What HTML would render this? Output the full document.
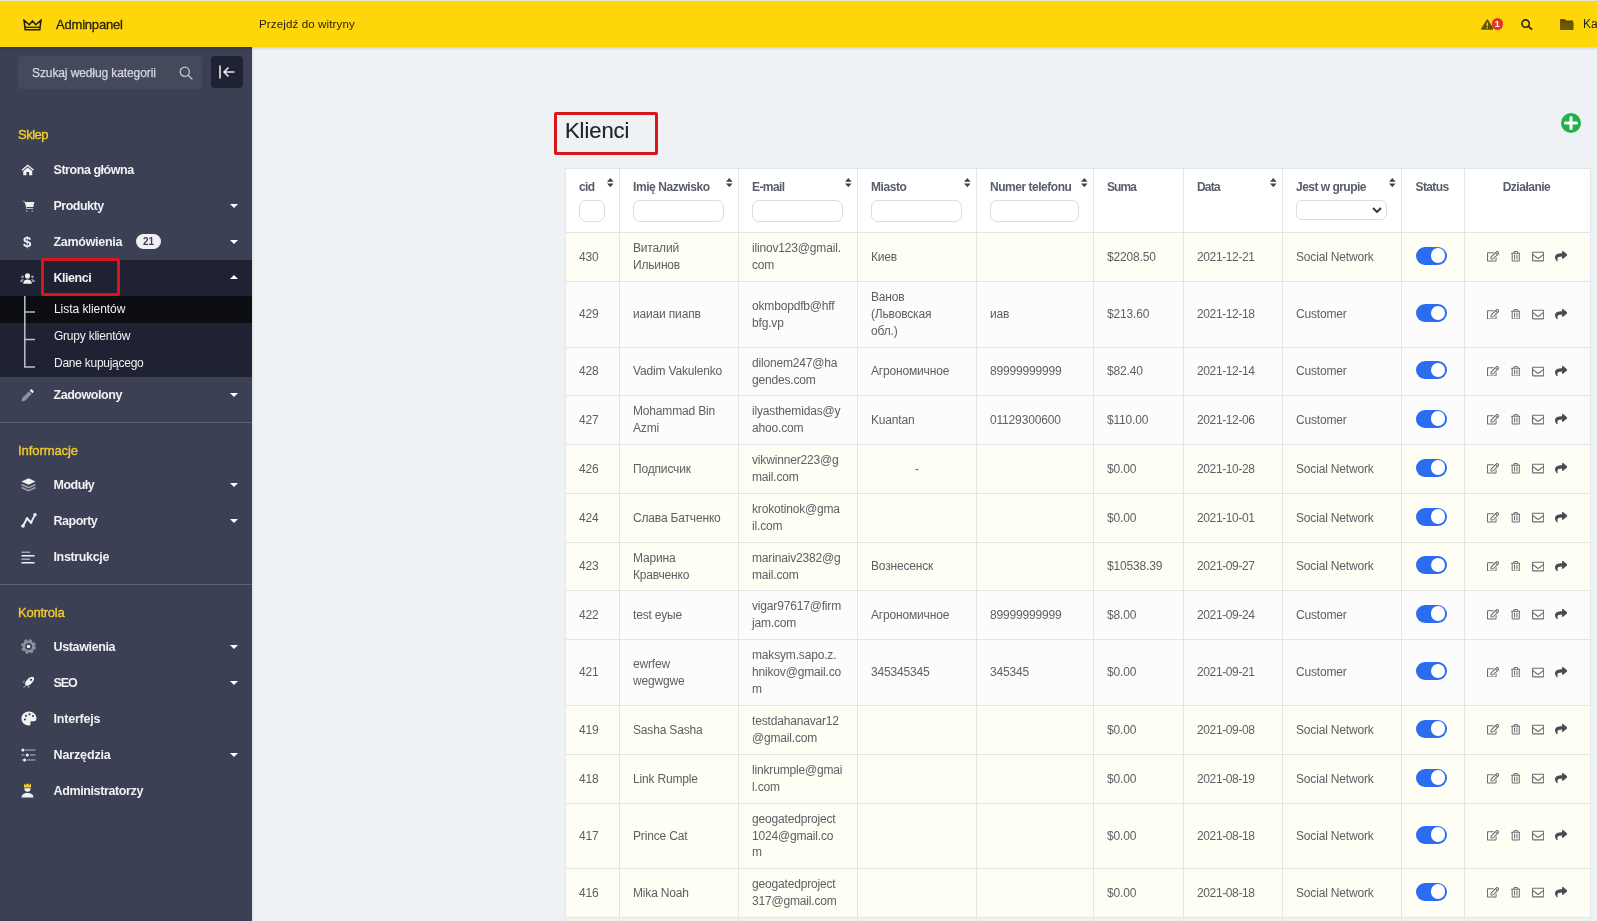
<!DOCTYPE html>
<html lang="pl"><head><meta charset="utf-8"><title>Klienci - Adminpanel</title>
<style>
*{box-sizing:border-box;margin:0;padding:0}
html,body{width:1597px;height:921px;overflow:hidden}
body{-webkit-font-smoothing:antialiased;font-family:"Liberation Sans",sans-serif;background:#eef2f4;color:#4b4f56;position:relative;font-size:12px}
#top{position:absolute;left:0;top:0;width:1597px;height:47px;background:#ffd60a;border-top:1px solid #e9e6da;z-index:5;box-shadow:0 1px 3px rgba(0,0,0,.18)}
#top .t{position:absolute;top:0;height:46px;line-height:46px;color:#2a2410;font-size:12.500px;white-space:nowrap}
#side{position:absolute;left:0;top:47px;width:252px;height:874px;background:#3c4054;z-index:3;box-shadow:1px 0 2px rgba(0,0,0,.08)}
#side .search{position:absolute;left:18px;top:9px;width:184px;height:33px;background:#444a5c;border-radius:4px;color:#d5d7de;font-size:12px;line-height:35px;padding-left:14px;white-space:nowrap;letter-spacing:-0.100px;-webkit-text-stroke:0.250px #d5d7de}
#side .collapse{position:absolute;left:211px;top:9px;width:32px;height:32px;background:#1f2233;border-radius:4px}
#side .lbl{position:absolute;left:18px;color:#f3cd2e;font-size:13px;letter-spacing:-0.350px;-webkit-text-stroke:0.350px #f3cd2e;white-space:nowrap;height:16px;line-height:16px}
#side .it{position:absolute;left:0;width:252px;height:36px;line-height:36px;color:#f1f1f3;font-weight:bold;font-size:12.500px;padding-left:53.500px;letter-spacing:-0.400px;white-space:nowrap}
#side .it.act{background:#1f2233}
#side .it svg.ic{position:absolute;left:20.500px;top:11px}
#side .it .car{position:absolute;left:230px;top:16px;width:0;height:0;border-left:4px solid transparent;border-right:4px solid transparent;border-top:4.500px solid #fff}
#side .it .car.up{border-top:none;border-bottom:4.500px solid #fff;top:15px}
#side .sub{position:absolute;left:0;width:252px;height:27px;line-height:27px;color:#f1f1f3;font-size:12px;padding-left:54px;background:#1f2233;letter-spacing:-0.120px;white-space:nowrap}
#side .sub.on{background:#0d0e13}
#side .hr{position:absolute;left:0;width:252px;height:1px;background:#5d6175}
#side .badge{display:inline-block;vertical-align:middle;margin-left:14px;margin-top:-2px;width:25px;height:15px;line-height:15px;border-radius:8px;background:#f1f1f3;color:#3c4054;font-size:10px;text-align:center;letter-spacing:0}
.redbox{position:absolute;border:3px solid #d9171b;border-radius:2px;z-index:9}
#main h1{position:absolute;left:565px;top:117px;font-size:22px;font-weight:normal;color:#20242c;line-height:28px;letter-spacing:-0.070px;-webkit-text-stroke:0.200px #20242c;white-space:nowrap}
.plus{position:absolute;left:1561px;top:113px;width:20px;height:20px}
#tb{position:absolute;left:565px;top:168px;width:1026px;border-collapse:collapse;table-layout:fixed;background:#fff}
#tb td,#tb th{border:1px solid #e4e5e7;padding:0 4px 0 13px;vertical-align:middle;text-align:left;font-size:12px;line-height:16.800px;color:#5e6065;white-space:nowrap;font-weight:normal;letter-spacing:-0.170px;overflow:hidden}
#tb td.dt{letter-spacing:-0.380px}
#tb tr.hd{height:64px}
#tb th{vertical-align:top;position:relative;background:#fff}
#tb th .hl{position:absolute;left:13px;top:10px;font-weight:bold;color:#585e69;font-size:12px;letter-spacing:-0.420px;white-space:nowrap;line-height:16px}
#tb th.c .hl{left:-2px;right:0;text-align:center}
#tb th .srt{position:absolute;right:5px;top:9px}
#tb th .inp{position:absolute;left:13px;top:31px;height:22px;border:1px solid #dadcdf;border-radius:7px;background:#fff}
#tb th .inp.sel{height:20px;border-radius:6px}
#tb th .inp.sel svg{position:absolute;right:4px;top:6px}
#tb tr.sn td{background:#fefef4}
#tb tr.cu td{background:#fcfcfc}
#tb tr.gr td{background:#e9f8ee}
#tb td.st{padding:0;text-align:center}
.tg{display:inline-block;width:31px;height:18px;border-radius:9px;background:#2b6cf0;position:relative;vertical-align:middle;margin-top:-1px;top:-1.100px;left:-1.500px}
.tg i{position:absolute;right:1.700px;top:1.750px;width:14.500px;height:14.500px;border-radius:50%;background:#fff}
#tb td.ac{padding:0}
.acw{position:relative;height:11px;width:124px;top:-0.500px}
.ai{position:absolute;top:0}
.ctr{text-align:center;padding-right:9px}

#tb,#side,#top,#main h1{will-change:transform}

</style></head><body>
<div id="top">
<svg style="position:absolute;left:23px;top:17.800px" width="19" height="12" viewBox="0 0 19 12"><path d="M1 1.200L2.200 10.700H16.800L18 1.200L12.700 5.800L9.500 2L6.300 5.800Z" fill="none" stroke="#221e10" stroke-width="1.500" stroke-linejoin="miter"/><path d="M2 8.300H17" stroke="#221e10" stroke-width="1.300"/></svg>
<span class="t" style="left:56px;font-size:13px;letter-spacing:-0.200px;top:1px;-webkit-text-stroke:0.300px #2a2410">Adminpanel</span>
<span class="t" style="left:259px;font-size:11.600px;letter-spacing:0.100px;top:0px">Przejdź do witryny</span>
<svg style="position:absolute;left:1480.700px;top:18px" width="12.600" height="10.800" viewBox="0 0 14 12"><path d="M7 1.200L13 11H1z" fill="#675600" stroke="#675600" stroke-width="1.800" stroke-linejoin="round"/><path d="M7 4.200v3.600" stroke="#ffd60a" stroke-width="1.500"/><circle cx="7" cy="9.600" r="0.850" fill="#ffd60a"/></svg>
<span style="position:absolute;left:1491.500px;top:17px;width:11.600px;height:11.600px;border-radius:50%;background:#e5342c;color:#fff;font-size:9px;font-weight:bold;line-height:12.600px;text-align:center">1</span>
<svg style="position:absolute;left:1521px;top:17.800px" width="11.500" height="11" viewBox="0 0 11.500 11"><circle cx="4.600" cy="4.600" r="3.700" fill="none" stroke="#2a2410" stroke-width="1.600"/><path d="M7.300 7.300L10.600 10.200" stroke="#2a2410" stroke-width="1.700" stroke-linecap="round"/></svg>
<svg style="position:absolute;left:1560px;top:18px" width="13.600" height="11" viewBox="0 0 13.600 11"><path d="M0 1Q0 0 1 0H4.600L6.200 1.600H12.200Q13.200 1.600 13.200 2.600V4.500H0z" fill="#5c4c00"/><path d="M0 3.900H13.600V10Q13.600 11 12.600 11H1Q0 11 0 10z" fill="#6b5a00"/></svg>
<span class="t" style="left:1583px;font-size:12px;top:-0.500px">Ka</span>
</div>

<div id="side">
<div class="search">Szukaj według kategorii<svg style="position:absolute;left:161px;top:10px" width="14" height="14" viewBox="0 0 14 14"><circle cx="5.800" cy="5.800" r="4.600" fill="none" stroke="#c3c6d0" stroke-width="1.300"/><path d="M9.200 9.200L13 13" stroke="#c3c6d0" stroke-width="1.300" stroke-linecap="round"/></svg></div>
<div class="collapse"><svg style="position:absolute;left:8px;top:9px" width="16" height="14" viewBox="0 0 16 14"><path d="M1 0.500v13M15.500 7H5M9.500 2.500L5 7l4.500 4.500" fill="none" stroke="#e8e9ee" stroke-width="1.600"/></svg></div>

<div class="lbl" style="top:80px;letter-spacing:-0.500px">Sklep</div>
<div class="it" style="top:105px;letter-spacing:-0.45px"><svg class="ic" width="13.500" height="11.700" viewBox="0 0 15 13" style="left:21px;top:12px"><path d="M7.500 0.500L0.500 6.300l1 1.100L7.500 2.500l6 4.900 1-1.100z" fill="#f1f1f3"/><path d="M7.500 3.800L2.500 7.900V12.500H6V9H9v3.500h3.500V7.900z" fill="#f1f1f3"/></svg>Strona główna</div>
<div class="it" style="top:141px;letter-spacing:-0.51px"><svg class="ic" width="14" height="13" viewBox="0 0 15 14" style="left:21.500px;top:12px"><path d="M0.500 1.400h2l0.500 1.200" fill="none" stroke="#8d91a1" stroke-width="1.200"/><path d="M2.800 2.200H13.300l-1.300 5.300H4.400z" fill="#f1f1f3"/><path d="M4.400 7.500l0.400 1.700H12" fill="none" stroke="#b9bcc8" stroke-width="1.100"/><circle cx="5.200" cy="12" r="1" fill="#8d91a1"/><circle cx="11" cy="12" r="1" fill="#8d91a1"/></svg>Produkty<span class="car"></span></div>
<div class="it" style="top:177px;letter-spacing:-0.3px"><span style="position:absolute;left:23px;top:0;font-size:15px;font-weight:bold;letter-spacing:0">$</span>Zamówienia<span class="badge">21</span><span class="car"></span></div>
<div class="it act" style="top:213px;letter-spacing:-0.45px"><svg class="ic" width="15" height="11" viewBox="0 0 16 12" style="left:19.700px;top:12.500px"><circle cx="8" cy="3.200" r="2.800" fill="#f1f1f3"/><path d="M3.300 11.800c0-3.200 2-4.700 4.700-4.700s4.700 1.500 4.700 4.700z" fill="#f1f1f3"/><circle cx="2.600" cy="4.200" r="1.500" fill="#9a9eae"/><circle cx="13.400" cy="4.200" r="1.500" fill="#9a9eae"/><path d="M0 9.800c0-2 1-3 2.600-3 .6 0 1.100.1 1.500.4-1 .8-1.500 1.700-1.600 2.600z" fill="#9a9eae"/><path d="M16 9.800c0-2-1-3-2.600-3-.6 0-1.100.1-1.500.4 1 .8 1.500 1.700 1.600 2.600z" fill="#9a9eae"/></svg>Klienci<span class="car up"></span></div>
<div class="sub on" style="top:249px;letter-spacing:-0.050px">Lista klientów</div>
<div class="sub" style="top:276px;letter-spacing:-0.230px">Grupy klientów</div>
<div class="sub" style="top:303px;letter-spacing:-0.260px">Dane kupującego</div>
<svg style="position:absolute;left:24px;top:249px" width="12" height="81" viewBox="0 0 12 81"><path d="M0.800 0V71H11M0.800 16H11M0.800 43.500H11" fill="none" stroke="#bfc1ca" stroke-width="1.500"/></svg>
<div class="redbox" style="left:41px;top:211px;width:79px;height:38px"></div>
<div class="it" style="top:330px;letter-spacing:-0.45px"><svg class="ic" width="13" height="13" viewBox="0 0 14 14" style="top:12px"><path d="M0.500 13.500l0.800-3.800L8.500 2.500l3 3L4.300 12.700z" fill="#8d91a1"/><path d="M9.300 1.700l1-1c.5-.5 1.200-.5 1.700 0l1.300 1.300c.5.500.5 1.200 0 1.700l-1 1z" fill="#f1f1f3"/></svg>Zadowolony<span class="car"></span></div>
<div class="hr" style="top:375px"></div>

<div class="lbl" style="top:396px;letter-spacing:-0.070px">Informacje</div>
<div class="it" style="top:420px;letter-spacing:-0.49px"><svg class="ic" width="15" height="14" viewBox="0 0 15 14"><path d="M7.500 0.300L14.500 3.500 7.500 6.700 0.500 3.500z" fill="#f1f1f3"/><path d="M0.500 6.500l7 3.200 7-3.200M0.500 9.500l7 3.200 7-3.200" fill="none" stroke="#9da1b0" stroke-width="1.500"/></svg>Moduły<span class="car"></span></div>
<div class="it" style="top:456px;letter-spacing:-0.49px"><svg class="ic" width="16" height="15" viewBox="0 0 16 15" style="top:10px"><path d="M2 13L6 5.500 10 9.500 14 1.800" fill="none" stroke="#f1f1f3" stroke-width="1.800" stroke-linejoin="round"/><circle cx="2" cy="13" r="1.800" fill="#f1f1f3"/><circle cx="6" cy="5.500" r="1.300" fill="#f1f1f3"/><circle cx="10" cy="9.500" r="1.300" fill="#f1f1f3"/><circle cx="14" cy="1.800" r="1.700" fill="#f1f1f3"/></svg>Raporty<span class="car"></span></div>
<div class="it" style="top:492px;letter-spacing:-0.35px"><svg class="ic" width="14" height="13" viewBox="0 0 14 13" style="top:12px"><path d="M0.500 1.200h8.500M0.500 8.200h8.500" stroke="#9da1b0" stroke-width="1.400"/><path d="M0.500 4.700h13M0.500 11.700h13" stroke="#f1f1f3" stroke-width="1.500"/></svg>Instrukcje</div>
<div class="hr" style="top:537px"></div>

<div class="lbl" style="top:558px;letter-spacing:-0.240px">Kontrola</div>
<div class="it" style="top:582px;letter-spacing:-0.36px"><svg class="ic" width="15" height="15" viewBox="0 0 15 15" style="top:10px"><circle cx="7.500" cy="7.500" r="4.800" fill="none" stroke="#8d91a1" stroke-width="2.600"/><circle cx="7.500" cy="7.500" r="6.500" fill="none" stroke="#8d91a1" stroke-width="1.800" stroke-dasharray="2.900 2.200"/><circle cx="7.500" cy="7.500" r="1.800" fill="#f1f1f3"/></svg>Ustawienia<span class="car"></span></div>
<div class="it" style="top:618px;letter-spacing:-1.1px"><svg class="ic" width="15" height="15" viewBox="0 0 15 15" style="top:10px"><path d="M3.200 5.200L1.200 7.800l2.600-.4zM9.300 11.400l-2.500 2 .3-2.700zM3.800 10.200L1.600 13.600l3.500-2.100z" fill="#8d91a1"/><ellipse cx="8.600" cy="6.200" rx="5.700" ry="2.900" transform="rotate(-45 8.600 6.200)" fill="#f1f1f3"/><circle cx="10" cy="4.800" r="1.100" fill="#3c4054"/></svg>SEO<span class="car"></span></div>
<div class="it" style="top:654px;letter-spacing:-0.2px"><svg class="ic" width="16" height="15" viewBox="0 0 16 15" style="top:10px"><path d="M8 0.500C3.800 0.500 0.500 3.600 0.500 7.500s3.300 7 7.500 7c1.200 0 1.800-.9 1.500-1.900-.3-1.100-.5-2.100 1.200-2.300l2.300-.1c1.500-.1 2.500-1.100 2.500-2.700C15.500 3.600 12.200 0.500 8 0.500z" fill="#f1f1f3"/><circle cx="4" cy="8.500" r="1.100" fill="#3c4054"/><circle cx="5" cy="4.800" r="1.100" fill="#3c4054"/><circle cx="8.500" cy="3.300" r="1.100" fill="#3c4054"/><circle cx="12" cy="5" r="1.100" fill="#3c4054"/></svg>Interfejs</div>
<div class="it" style="top:690px;letter-spacing:-0.13px"><svg class="ic" width="15" height="14" viewBox="0 0 15 14" style="top:11px"><path d="M4.500 2h10M0.500 7h3M9 7h5.500M6 12h8.500M0.500 12h1" stroke="#8d91a1" stroke-width="1.400"/><circle cx="2" cy="2" r="1.600" fill="#f1f1f3"/><circle cx="6.300" cy="7" r="1.600" fill="#f1f1f3"/><circle cx="3.600" cy="12" r="1.600" fill="#f1f1f3"/></svg>Narzędzia<span class="car"></span></div>
<div class="it" style="top:726px;letter-spacing:-0.38px"><svg class="ic" width="13" height="15" viewBox="0 0 13 15" style="left:21px;top:10px"><path d="M3 0.500l1.700 1.600L6.500 0.300l1.800 1.800L10 0.500V4.500H3z" fill="#f3cd2e"/><path d="M3.300 5.200h6.400c0 2.300-1.300 3.600-3.200 3.600S3.300 7.500 3.300 5.200z" fill="#f1f1f3"/><path d="M0.500 14.500c.3-3 2-4.500 6-4.500s5.700 1.500 6 4.500z" fill="#f1f1f3"/></svg>Administratorzy</div>
</div>

<div id="main">
<div class="redbox" style="left:554px;top:112px;width:104px;height:43px"></div>
<h1>Klienci</h1>
<div class="plus"><svg width="20" height="20" viewBox="0 0 20 20"><circle cx="10" cy="10" r="10" fill="#22b14c"/><path d="M10 4.500v11M4.500 10h11" stroke="#fff" stroke-width="3" stroke-linecap="round"/></svg></div>
<table id="tb"><colgroup><col style="width:54px"><col style="width:119px"><col style="width:119px"><col style="width:119px"><col style="width:117px"><col style="width:90px"><col style="width:99px"><col style="width:119px"><col style="width:63px"><col style="width:126px"></colgroup>
<tr class="hd">
<th><span class="hl" style="letter-spacing:-0.6px">cid</span><svg class="srt" width="6.600" height="9.200" viewBox="0 0 7 10" preserveAspectRatio="none"><path fill="#3f434a" d="M3.500 0L7 4H0zM0 6h7L3.500 10z"/></svg><span class="inp" style="width:26px"></span></th>
<th><span class="hl" style="letter-spacing:-0.41px">Imię Nazwisko</span><svg class="srt" width="6.600" height="9.200" viewBox="0 0 7 10" preserveAspectRatio="none"><path fill="#3f434a" d="M3.500 0L7 4H0zM0 6h7L3.500 10z"/></svg><span class="inp" style="width:91px"></span></th>
<th><span class="hl" style="letter-spacing:-0.58px">E-mail</span><svg class="srt" width="6.600" height="9.200" viewBox="0 0 7 10" preserveAspectRatio="none"><path fill="#3f434a" d="M3.500 0L7 4H0zM0 6h7L3.500 10z"/></svg><span class="inp" style="width:91px"></span></th>
<th><span class="hl" style="letter-spacing:-0.44px">Miasto</span><svg class="srt" width="6.600" height="9.200" viewBox="0 0 7 10" preserveAspectRatio="none"><path fill="#3f434a" d="M3.500 0L7 4H0zM0 6h7L3.500 10z"/></svg><span class="inp" style="width:91px"></span></th>
<th><span class="hl" style="letter-spacing:-0.47px">Numer telefonu</span><svg class="srt" width="6.600" height="9.200" viewBox="0 0 7 10" preserveAspectRatio="none"><path fill="#3f434a" d="M3.500 0L7 4H0zM0 6h7L3.500 10z"/></svg><span class="inp" style="width:89px"></span></th>
<th><span class="hl" style="letter-spacing:-0.9px">Suma</span></th>
<th><span class="hl" style="letter-spacing:-0.8px">Data</span><svg class="srt" width="6.600" height="9.200" viewBox="0 0 7 10" preserveAspectRatio="none"><path fill="#3f434a" d="M3.500 0L7 4H0zM0 6h7L3.500 10z"/></svg></th>
<th><span class="hl" style="letter-spacing:-0.52px">Jest w grupie</span><svg class="srt" width="6.600" height="9.200" viewBox="0 0 7 10" preserveAspectRatio="none"><path fill="#3f434a" d="M3.500 0L7 4H0zM0 6h7L3.500 10z"/></svg><span class="inp sel" style="width:91px"><svg width="10" height="7" viewBox="0 0 10 7"><path d="M1 1l4 4 4-4" fill="none" stroke="#333" stroke-width="1.800"/></svg></span></th>
<th class="c"><span class="hl" style="letter-spacing:-0.62px">Status</span></th>
<th class="c"><span class="hl" style="letter-spacing:-0.49px">Działanie</span></th>
</tr>
<tr class="sn" style="height:49px"><td>430</td><td>Виталий<br>Ильинов</td><td>ilinov123@gmail.<br>com</td><td>Киев</td><td></td><td>$2208.50</td><td class="dt">2021-12-21</td><td>Social Network</td><td class="st"><span class="tg"><i></i></span></td><td class="ac"><div class="acw"><svg class="ai" style="left:22px;top:0" width="12.300" height="10.500" viewBox="0 0 576 512" preserveAspectRatio="none"><path fill="#696d73" d="M402.3 344.9l32-32c5-5 13.700-1.500 13.700 5.700V464c0 26.500-21.500 48-48 48H48c-26.500 0-48-21.500-48-48V112c0-26.500 21.500-48 48-48h273.500c7.100 0 10.700 8.600 5.700 13.700l-32 32c-1.500 1.500-3.500 2.300-5.700 2.300H48v352h352V350.500c0-2.100.8-4.100 2.300-5.600zm156.600-201.800L296.300 405.700l-90.400 10c-26.200 2.900-48.500-19.200-45.600-45.600l10-90.400L432.900 17.100c22.900-22.900 59.900-22.900 82.700 0l43.200 43.200c22.900 22.900 22.900 60 .1 82.800zM460.100 174L402 115.900 216.200 301.800l-7.300 65.300 65.300-7.300L460.100 174zm64.800-79.700l-43.200-43.200c-4.100-4.100-10.800-4.100-14.800 0L436 82l58.100 58.100 30.900-30.900c4-4.200 4-10.800-.1-14.900z"/></svg><svg class="ai" style="left:45.500px;top:0.300px" width="9.500" height="10.500" viewBox="0 0 448 512" preserveAspectRatio="none"><path fill="#696d73" d="M268 416h24a12 12 0 0 0 12-12V188a12 12 0 0 0-12-12h-24a12 12 0 0 0-12 12v216a12 12 0 0 0 12 12zM432 80h-82.410l-34-56.700A48 48 0 0 0 274.410 0H173.590a48 48 0 0 0-41.160 23.300L98.410 80H16A16 16 0 0 0 0 96v16a16 16 0 0 0 16 16h16v336a48 48 0 0 0 48 48h288a48 48 0 0 0 48-48V128h16a16 16 0 0 0 16-16V96a16 16 0 0 0-16-16zM171.840 50.910A6 6 0 0 1 177 48h94a6 6 0 0 1 5.150 2.910L293.610 80H154.390zM368 464H80V128h288zm-212-48h24a12 12 0 0 0 12-12V188a12 12 0 0 0-12-12h-24a12 12 0 0 0-12 12v216a12 12 0 0 0 12 12z"/></svg><svg class="ai" style="left:66.900px;top:-0.600px" width="12.300" height="13" viewBox="0 0 512 512" preserveAspectRatio="none"><path fill="#696d73" d="M464 64H48C21.490 64 0 85.490 0 112v288c0 26.510 21.490 48 48 48h416c26.510 0 48-21.490 48-48V112c0-26.510-21.490-48-48-48zm0 48v40.805c-22.422 18.259-58.168 46.651-134.587 106.490-16.841 13.247-50.201 45.072-73.413 44.701-23.208.375-56.579-31.459-73.413-44.701C106.180 199.465 70.425 171.067 48 152.805V112h416zM48 400V214.398c22.914 18.251 55.409 43.862 104.938 82.646 21.857 17.205 60.134 55.186 103.062 54.955 42.717.231 80.509-37.199 103.053-54.947 49.528-38.783 82.032-64.401 104.947-82.653V400H48z"/></svg><svg class="ai" style="left:89.900px;top:-0.700px" width="12.600" height="12" viewBox="0 0 512 512" preserveAspectRatio="none"><path fill="#474b52" d="M503.691 189.836L327.687 37.851C312.281 24.546 288 35.347 288 56.015v80.053C127.371 137.907 0 170.100 0 322.326c0 61.441 39.581 122.309 83.333 154.132 13.653 9.931 33.111-2.533 28.077-18.631C66.066 312.814 132.917 274.316 288 272.085V360c0 20.700 24.300 31.453 39.687 18.164l176.004-152c11.071-9.562 11.086-26.753 0-36.328z"/></svg></div></td></tr>
<tr class="cu" style="height:66px"><td>429</td><td>иаиаи пиапв</td><td>okmbopdfb@hff<br>bfg.vp</td><td>Ванов<br>(Львовская<br>обл.)</td><td>иав</td><td>$213.60</td><td class="dt">2021-12-18</td><td>Customer</td><td class="st"><span class="tg"><i></i></span></td><td class="ac"><div class="acw"><svg class="ai" style="left:22px;top:0" width="12.300" height="10.500" viewBox="0 0 576 512" preserveAspectRatio="none"><path fill="#696d73" d="M402.3 344.9l32-32c5-5 13.700-1.500 13.700 5.700V464c0 26.500-21.500 48-48 48H48c-26.500 0-48-21.500-48-48V112c0-26.500 21.500-48 48-48h273.500c7.100 0 10.700 8.600 5.700 13.700l-32 32c-1.500 1.500-3.500 2.300-5.700 2.300H48v352h352V350.500c0-2.100.8-4.100 2.300-5.600zm156.600-201.800L296.300 405.700l-90.400 10c-26.200 2.900-48.500-19.200-45.600-45.600l10-90.400L432.900 17.100c22.900-22.900 59.900-22.900 82.700 0l43.200 43.200c22.900 22.900 22.900 60 .1 82.800zM460.100 174L402 115.900 216.200 301.800l-7.300 65.300 65.300-7.300L460.100 174zm64.800-79.700l-43.200-43.200c-4.100-4.100-10.800-4.100-14.800 0L436 82l58.100 58.100 30.900-30.900c4-4.200 4-10.800-.1-14.900z"/></svg><svg class="ai" style="left:45.500px;top:0.300px" width="9.500" height="10.500" viewBox="0 0 448 512" preserveAspectRatio="none"><path fill="#696d73" d="M268 416h24a12 12 0 0 0 12-12V188a12 12 0 0 0-12-12h-24a12 12 0 0 0-12 12v216a12 12 0 0 0 12 12zM432 80h-82.410l-34-56.700A48 48 0 0 0 274.410 0H173.590a48 48 0 0 0-41.160 23.300L98.410 80H16A16 16 0 0 0 0 96v16a16 16 0 0 0 16 16h16v336a48 48 0 0 0 48 48h288a48 48 0 0 0 48-48V128h16a16 16 0 0 0 16-16V96a16 16 0 0 0-16-16zM171.840 50.910A6 6 0 0 1 177 48h94a6 6 0 0 1 5.150 2.910L293.610 80H154.390zM368 464H80V128h288zm-212-48h24a12 12 0 0 0 12-12V188a12 12 0 0 0-12-12h-24a12 12 0 0 0-12 12v216a12 12 0 0 0 12 12z"/></svg><svg class="ai" style="left:66.900px;top:-0.600px" width="12.300" height="13" viewBox="0 0 512 512" preserveAspectRatio="none"><path fill="#696d73" d="M464 64H48C21.490 64 0 85.490 0 112v288c0 26.510 21.490 48 48 48h416c26.510 0 48-21.490 48-48V112c0-26.510-21.490-48-48-48zm0 48v40.805c-22.422 18.259-58.168 46.651-134.587 106.490-16.841 13.247-50.201 45.072-73.413 44.701-23.208.375-56.579-31.459-73.413-44.701C106.180 199.465 70.425 171.067 48 152.805V112h416zM48 400V214.398c22.914 18.251 55.409 43.862 104.938 82.646 21.857 17.205 60.134 55.186 103.062 54.955 42.717.231 80.509-37.199 103.053-54.947 49.528-38.783 82.032-64.401 104.947-82.653V400H48z"/></svg><svg class="ai" style="left:89.900px;top:-0.700px" width="12.600" height="12" viewBox="0 0 512 512" preserveAspectRatio="none"><path fill="#474b52" d="M503.691 189.836L327.687 37.851C312.281 24.546 288 35.347 288 56.015v80.053C127.371 137.907 0 170.100 0 322.326c0 61.441 39.581 122.309 83.333 154.132 13.653 9.931 33.111-2.533 28.077-18.631C66.066 312.814 132.917 274.316 288 272.085V360c0 20.700 24.300 31.453 39.687 18.164l176.004-152c11.071-9.562 11.086-26.753 0-36.328z"/></svg></div></td></tr>
<tr class="cu" style="height:48px"><td>428</td><td>Vadim Vakulenko</td><td>dilonem247@ha<br>gendes.com</td><td>Агрономичное</td><td>89999999999</td><td>$82.40</td><td class="dt">2021-12-14</td><td>Customer</td><td class="st"><span class="tg"><i></i></span></td><td class="ac"><div class="acw"><svg class="ai" style="left:22px;top:0" width="12.300" height="10.500" viewBox="0 0 576 512" preserveAspectRatio="none"><path fill="#696d73" d="M402.3 344.9l32-32c5-5 13.700-1.500 13.700 5.700V464c0 26.500-21.500 48-48 48H48c-26.500 0-48-21.500-48-48V112c0-26.500 21.500-48 48-48h273.500c7.100 0 10.700 8.600 5.700 13.700l-32 32c-1.500 1.500-3.500 2.300-5.700 2.300H48v352h352V350.500c0-2.100.8-4.100 2.300-5.600zm156.600-201.800L296.300 405.700l-90.400 10c-26.200 2.900-48.500-19.200-45.600-45.600l10-90.400L432.900 17.100c22.900-22.900 59.900-22.900 82.700 0l43.200 43.200c22.900 22.900 22.900 60 .1 82.800zM460.100 174L402 115.900 216.200 301.800l-7.300 65.300 65.300-7.300L460.100 174zm64.800-79.700l-43.200-43.200c-4.100-4.100-10.800-4.100-14.800 0L436 82l58.100 58.100 30.900-30.900c4-4.200 4-10.800-.1-14.900z"/></svg><svg class="ai" style="left:45.500px;top:0.300px" width="9.500" height="10.500" viewBox="0 0 448 512" preserveAspectRatio="none"><path fill="#696d73" d="M268 416h24a12 12 0 0 0 12-12V188a12 12 0 0 0-12-12h-24a12 12 0 0 0-12 12v216a12 12 0 0 0 12 12zM432 80h-82.410l-34-56.700A48 48 0 0 0 274.410 0H173.590a48 48 0 0 0-41.160 23.300L98.410 80H16A16 16 0 0 0 0 96v16a16 16 0 0 0 16 16h16v336a48 48 0 0 0 48 48h288a48 48 0 0 0 48-48V128h16a16 16 0 0 0 16-16V96a16 16 0 0 0-16-16zM171.840 50.910A6 6 0 0 1 177 48h94a6 6 0 0 1 5.150 2.910L293.610 80H154.390zM368 464H80V128h288zm-212-48h24a12 12 0 0 0 12-12V188a12 12 0 0 0-12-12h-24a12 12 0 0 0-12 12v216a12 12 0 0 0 12 12z"/></svg><svg class="ai" style="left:66.900px;top:-0.600px" width="12.300" height="13" viewBox="0 0 512 512" preserveAspectRatio="none"><path fill="#696d73" d="M464 64H48C21.490 64 0 85.490 0 112v288c0 26.510 21.490 48 48 48h416c26.510 0 48-21.490 48-48V112c0-26.510-21.490-48-48-48zm0 48v40.805c-22.422 18.259-58.168 46.651-134.587 106.490-16.841 13.247-50.201 45.072-73.413 44.701-23.208.375-56.579-31.459-73.413-44.701C106.180 199.465 70.425 171.067 48 152.805V112h416zM48 400V214.398c22.914 18.251 55.409 43.862 104.938 82.646 21.857 17.205 60.134 55.186 103.062 54.955 42.717.231 80.509-37.199 103.053-54.947 49.528-38.783 82.032-64.401 104.947-82.653V400H48z"/></svg><svg class="ai" style="left:89.900px;top:-0.700px" width="12.600" height="12" viewBox="0 0 512 512" preserveAspectRatio="none"><path fill="#474b52" d="M503.691 189.836L327.687 37.851C312.281 24.546 288 35.347 288 56.015v80.053C127.371 137.907 0 170.100 0 322.326c0 61.441 39.581 122.309 83.333 154.132 13.653 9.931 33.111-2.533 28.077-18.631C66.066 312.814 132.917 274.316 288 272.085V360c0 20.700 24.300 31.453 39.687 18.164l176.004-152c11.071-9.562 11.086-26.753 0-36.328z"/></svg></div></td></tr>
<tr class="cu" style="height:49px"><td>427</td><td>Mohammad Bin<br>Azmi</td><td>ilyasthemidas@y<br>ahoo.com</td><td>Kuantan</td><td>01129300600</td><td>$110.00</td><td class="dt">2021-12-06</td><td>Customer</td><td class="st"><span class="tg"><i></i></span></td><td class="ac"><div class="acw"><svg class="ai" style="left:22px;top:0" width="12.300" height="10.500" viewBox="0 0 576 512" preserveAspectRatio="none"><path fill="#696d73" d="M402.3 344.9l32-32c5-5 13.700-1.500 13.700 5.700V464c0 26.500-21.500 48-48 48H48c-26.500 0-48-21.500-48-48V112c0-26.500 21.500-48 48-48h273.500c7.100 0 10.700 8.600 5.700 13.700l-32 32c-1.500 1.500-3.500 2.300-5.700 2.300H48v352h352V350.500c0-2.100.8-4.100 2.300-5.600zm156.600-201.800L296.300 405.700l-90.400 10c-26.200 2.900-48.500-19.200-45.600-45.600l10-90.400L432.900 17.100c22.900-22.900 59.900-22.900 82.700 0l43.200 43.200c22.900 22.900 22.900 60 .1 82.800zM460.100 174L402 115.900 216.200 301.800l-7.300 65.300 65.300-7.300L460.100 174zm64.800-79.700l-43.200-43.200c-4.100-4.100-10.800-4.100-14.800 0L436 82l58.100 58.100 30.900-30.900c4-4.200 4-10.800-.1-14.900z"/></svg><svg class="ai" style="left:45.500px;top:0.300px" width="9.500" height="10.500" viewBox="0 0 448 512" preserveAspectRatio="none"><path fill="#696d73" d="M268 416h24a12 12 0 0 0 12-12V188a12 12 0 0 0-12-12h-24a12 12 0 0 0-12 12v216a12 12 0 0 0 12 12zM432 80h-82.410l-34-56.700A48 48 0 0 0 274.410 0H173.590a48 48 0 0 0-41.160 23.300L98.410 80H16A16 16 0 0 0 0 96v16a16 16 0 0 0 16 16h16v336a48 48 0 0 0 48 48h288a48 48 0 0 0 48-48V128h16a16 16 0 0 0 16-16V96a16 16 0 0 0-16-16zM171.840 50.910A6 6 0 0 1 177 48h94a6 6 0 0 1 5.150 2.910L293.610 80H154.390zM368 464H80V128h288zm-212-48h24a12 12 0 0 0 12-12V188a12 12 0 0 0-12-12h-24a12 12 0 0 0-12 12v216a12 12 0 0 0 12 12z"/></svg><svg class="ai" style="left:66.900px;top:-0.600px" width="12.300" height="13" viewBox="0 0 512 512" preserveAspectRatio="none"><path fill="#696d73" d="M464 64H48C21.490 64 0 85.490 0 112v288c0 26.510 21.490 48 48 48h416c26.510 0 48-21.490 48-48V112c0-26.510-21.490-48-48-48zm0 48v40.805c-22.422 18.259-58.168 46.651-134.587 106.490-16.841 13.247-50.201 45.072-73.413 44.701-23.208.375-56.579-31.459-73.413-44.701C106.180 199.465 70.425 171.067 48 152.805V112h416zM48 400V214.398c22.914 18.251 55.409 43.862 104.938 82.646 21.857 17.205 60.134 55.186 103.062 54.955 42.717.231 80.509-37.199 103.053-54.947 49.528-38.783 82.032-64.401 104.947-82.653V400H48z"/></svg><svg class="ai" style="left:89.900px;top:-0.700px" width="12.600" height="12" viewBox="0 0 512 512" preserveAspectRatio="none"><path fill="#474b52" d="M503.691 189.836L327.687 37.851C312.281 24.546 288 35.347 288 56.015v80.053C127.371 137.907 0 170.100 0 322.326c0 61.441 39.581 122.309 83.333 154.132 13.653 9.931 33.111-2.533 28.077-18.631C66.066 312.814 132.917 274.316 288 272.085V360c0 20.700 24.300 31.453 39.687 18.164l176.004-152c11.071-9.562 11.086-26.753 0-36.328z"/></svg></div></td></tr>
<tr class="sn" style="height:49px"><td>426</td><td>Подписчик</td><td>vikwinner223@g<br>mail.com</td><td><div class='ctr'>-</div></td><td></td><td>$0.00</td><td class="dt">2021-10-28</td><td>Social Network</td><td class="st"><span class="tg"><i></i></span></td><td class="ac"><div class="acw"><svg class="ai" style="left:22px;top:0" width="12.300" height="10.500" viewBox="0 0 576 512" preserveAspectRatio="none"><path fill="#696d73" d="M402.3 344.9l32-32c5-5 13.700-1.500 13.700 5.700V464c0 26.500-21.500 48-48 48H48c-26.500 0-48-21.500-48-48V112c0-26.500 21.500-48 48-48h273.500c7.100 0 10.700 8.600 5.700 13.700l-32 32c-1.500 1.500-3.500 2.300-5.700 2.300H48v352h352V350.500c0-2.100.8-4.100 2.300-5.600zm156.600-201.800L296.300 405.700l-90.400 10c-26.200 2.900-48.500-19.200-45.600-45.600l10-90.400L432.900 17.100c22.900-22.900 59.900-22.900 82.700 0l43.200 43.200c22.900 22.900 22.900 60 .1 82.800zM460.100 174L402 115.900 216.200 301.800l-7.300 65.300 65.300-7.300L460.100 174zm64.800-79.700l-43.200-43.200c-4.100-4.100-10.800-4.100-14.800 0L436 82l58.100 58.100 30.900-30.900c4-4.200 4-10.800-.1-14.900z"/></svg><svg class="ai" style="left:45.500px;top:0.300px" width="9.500" height="10.500" viewBox="0 0 448 512" preserveAspectRatio="none"><path fill="#696d73" d="M268 416h24a12 12 0 0 0 12-12V188a12 12 0 0 0-12-12h-24a12 12 0 0 0-12 12v216a12 12 0 0 0 12 12zM432 80h-82.410l-34-56.700A48 48 0 0 0 274.410 0H173.590a48 48 0 0 0-41.160 23.300L98.410 80H16A16 16 0 0 0 0 96v16a16 16 0 0 0 16 16h16v336a48 48 0 0 0 48 48h288a48 48 0 0 0 48-48V128h16a16 16 0 0 0 16-16V96a16 16 0 0 0-16-16zM171.840 50.910A6 6 0 0 1 177 48h94a6 6 0 0 1 5.150 2.910L293.610 80H154.390zM368 464H80V128h288zm-212-48h24a12 12 0 0 0 12-12V188a12 12 0 0 0-12-12h-24a12 12 0 0 0-12 12v216a12 12 0 0 0 12 12z"/></svg><svg class="ai" style="left:66.900px;top:-0.600px" width="12.300" height="13" viewBox="0 0 512 512" preserveAspectRatio="none"><path fill="#696d73" d="M464 64H48C21.490 64 0 85.490 0 112v288c0 26.510 21.490 48 48 48h416c26.510 0 48-21.490 48-48V112c0-26.510-21.490-48-48-48zm0 48v40.805c-22.422 18.259-58.168 46.651-134.587 106.490-16.841 13.247-50.201 45.072-73.413 44.701-23.208.375-56.579-31.459-73.413-44.701C106.180 199.465 70.425 171.067 48 152.805V112h416zM48 400V214.398c22.914 18.251 55.409 43.862 104.938 82.646 21.857 17.205 60.134 55.186 103.062 54.955 42.717.231 80.509-37.199 103.053-54.947 49.528-38.783 82.032-64.401 104.947-82.653V400H48z"/></svg><svg class="ai" style="left:89.900px;top:-0.700px" width="12.600" height="12" viewBox="0 0 512 512" preserveAspectRatio="none"><path fill="#474b52" d="M503.691 189.836L327.687 37.851C312.281 24.546 288 35.347 288 56.015v80.053C127.371 137.907 0 170.100 0 322.326c0 61.441 39.581 122.309 83.333 154.132 13.653 9.931 33.111-2.533 28.077-18.631C66.066 312.814 132.917 274.316 288 272.085V360c0 20.700 24.300 31.453 39.687 18.164l176.004-152c11.071-9.562 11.086-26.753 0-36.328z"/></svg></div></td></tr>
<tr class="sn" style="height:49px"><td>424</td><td>Слава Батченко</td><td>krokotinok@gma<br>il.com</td><td></td><td></td><td>$0.00</td><td class="dt">2021-10-01</td><td>Social Network</td><td class="st"><span class="tg"><i></i></span></td><td class="ac"><div class="acw"><svg class="ai" style="left:22px;top:0" width="12.300" height="10.500" viewBox="0 0 576 512" preserveAspectRatio="none"><path fill="#696d73" d="M402.3 344.9l32-32c5-5 13.700-1.500 13.700 5.700V464c0 26.500-21.500 48-48 48H48c-26.500 0-48-21.500-48-48V112c0-26.500 21.500-48 48-48h273.500c7.100 0 10.700 8.600 5.700 13.700l-32 32c-1.500 1.500-3.500 2.300-5.700 2.300H48v352h352V350.500c0-2.100.8-4.100 2.300-5.600zm156.600-201.800L296.300 405.700l-90.400 10c-26.200 2.900-48.500-19.200-45.600-45.600l10-90.400L432.900 17.100c22.900-22.900 59.900-22.900 82.700 0l43.200 43.200c22.900 22.900 22.900 60 .1 82.800zM460.100 174L402 115.900 216.200 301.800l-7.300 65.300 65.300-7.300L460.100 174zm64.800-79.700l-43.200-43.200c-4.100-4.100-10.800-4.100-14.800 0L436 82l58.100 58.100 30.900-30.900c4-4.200 4-10.800-.1-14.900z"/></svg><svg class="ai" style="left:45.500px;top:0.300px" width="9.500" height="10.500" viewBox="0 0 448 512" preserveAspectRatio="none"><path fill="#696d73" d="M268 416h24a12 12 0 0 0 12-12V188a12 12 0 0 0-12-12h-24a12 12 0 0 0-12 12v216a12 12 0 0 0 12 12zM432 80h-82.410l-34-56.700A48 48 0 0 0 274.410 0H173.590a48 48 0 0 0-41.160 23.300L98.410 80H16A16 16 0 0 0 0 96v16a16 16 0 0 0 16 16h16v336a48 48 0 0 0 48 48h288a48 48 0 0 0 48-48V128h16a16 16 0 0 0 16-16V96a16 16 0 0 0-16-16zM171.840 50.910A6 6 0 0 1 177 48h94a6 6 0 0 1 5.150 2.910L293.610 80H154.390zM368 464H80V128h288zm-212-48h24a12 12 0 0 0 12-12V188a12 12 0 0 0-12-12h-24a12 12 0 0 0-12 12v216a12 12 0 0 0 12 12z"/></svg><svg class="ai" style="left:66.900px;top:-0.600px" width="12.300" height="13" viewBox="0 0 512 512" preserveAspectRatio="none"><path fill="#696d73" d="M464 64H48C21.490 64 0 85.490 0 112v288c0 26.510 21.490 48 48 48h416c26.510 0 48-21.490 48-48V112c0-26.510-21.490-48-48-48zm0 48v40.805c-22.422 18.259-58.168 46.651-134.587 106.490-16.841 13.247-50.201 45.072-73.413 44.701-23.208.375-56.579-31.459-73.413-44.701C106.180 199.465 70.425 171.067 48 152.805V112h416zM48 400V214.398c22.914 18.251 55.409 43.862 104.938 82.646 21.857 17.205 60.134 55.186 103.062 54.955 42.717.231 80.509-37.199 103.053-54.947 49.528-38.783 82.032-64.401 104.947-82.653V400H48z"/></svg><svg class="ai" style="left:89.900px;top:-0.700px" width="12.600" height="12" viewBox="0 0 512 512" preserveAspectRatio="none"><path fill="#474b52" d="M503.691 189.836L327.687 37.851C312.281 24.546 288 35.347 288 56.015v80.053C127.371 137.907 0 170.100 0 322.326c0 61.441 39.581 122.309 83.333 154.132 13.653 9.931 33.111-2.533 28.077-18.631C66.066 312.814 132.917 274.316 288 272.085V360c0 20.700 24.300 31.453 39.687 18.164l176.004-152c11.071-9.562 11.086-26.753 0-36.328z"/></svg></div></td></tr>
<tr class="sn" style="height:48px"><td>423</td><td>Марина<br>Кравченко</td><td>marinaiv2382@g<br>mail.com</td><td>Вознесенск</td><td></td><td>$10538.39</td><td class="dt">2021-09-27</td><td>Social Network</td><td class="st"><span class="tg"><i></i></span></td><td class="ac"><div class="acw"><svg class="ai" style="left:22px;top:0" width="12.300" height="10.500" viewBox="0 0 576 512" preserveAspectRatio="none"><path fill="#696d73" d="M402.3 344.9l32-32c5-5 13.700-1.500 13.700 5.700V464c0 26.500-21.500 48-48 48H48c-26.500 0-48-21.500-48-48V112c0-26.500 21.500-48 48-48h273.500c7.100 0 10.700 8.600 5.700 13.700l-32 32c-1.500 1.500-3.500 2.300-5.700 2.300H48v352h352V350.500c0-2.100.8-4.100 2.300-5.600zm156.600-201.800L296.300 405.700l-90.400 10c-26.200 2.900-48.500-19.200-45.600-45.600l10-90.400L432.900 17.100c22.900-22.900 59.900-22.900 82.700 0l43.200 43.200c22.900 22.900 22.900 60 .1 82.800zM460.100 174L402 115.900 216.200 301.800l-7.300 65.300 65.300-7.300L460.100 174zm64.800-79.700l-43.200-43.200c-4.100-4.100-10.800-4.100-14.800 0L436 82l58.100 58.100 30.900-30.900c4-4.200 4-10.800-.1-14.900z"/></svg><svg class="ai" style="left:45.500px;top:0.300px" width="9.500" height="10.500" viewBox="0 0 448 512" preserveAspectRatio="none"><path fill="#696d73" d="M268 416h24a12 12 0 0 0 12-12V188a12 12 0 0 0-12-12h-24a12 12 0 0 0-12 12v216a12 12 0 0 0 12 12zM432 80h-82.410l-34-56.700A48 48 0 0 0 274.410 0H173.590a48 48 0 0 0-41.160 23.300L98.410 80H16A16 16 0 0 0 0 96v16a16 16 0 0 0 16 16h16v336a48 48 0 0 0 48 48h288a48 48 0 0 0 48-48V128h16a16 16 0 0 0 16-16V96a16 16 0 0 0-16-16zM171.840 50.910A6 6 0 0 1 177 48h94a6 6 0 0 1 5.150 2.910L293.610 80H154.390zM368 464H80V128h288zm-212-48h24a12 12 0 0 0 12-12V188a12 12 0 0 0-12-12h-24a12 12 0 0 0-12 12v216a12 12 0 0 0 12 12z"/></svg><svg class="ai" style="left:66.900px;top:-0.600px" width="12.300" height="13" viewBox="0 0 512 512" preserveAspectRatio="none"><path fill="#696d73" d="M464 64H48C21.490 64 0 85.490 0 112v288c0 26.510 21.490 48 48 48h416c26.510 0 48-21.490 48-48V112c0-26.510-21.490-48-48-48zm0 48v40.805c-22.422 18.259-58.168 46.651-134.587 106.490-16.841 13.247-50.201 45.072-73.413 44.701-23.208.375-56.579-31.459-73.413-44.701C106.180 199.465 70.425 171.067 48 152.805V112h416zM48 400V214.398c22.914 18.251 55.409 43.862 104.938 82.646 21.857 17.205 60.134 55.186 103.062 54.955 42.717.231 80.509-37.199 103.053-54.947 49.528-38.783 82.032-64.401 104.947-82.653V400H48z"/></svg><svg class="ai" style="left:89.900px;top:-0.700px" width="12.600" height="12" viewBox="0 0 512 512" preserveAspectRatio="none"><path fill="#474b52" d="M503.691 189.836L327.687 37.851C312.281 24.546 288 35.347 288 56.015v80.053C127.371 137.907 0 170.100 0 322.326c0 61.441 39.581 122.309 83.333 154.132 13.653 9.931 33.111-2.533 28.077-18.631C66.066 312.814 132.917 274.316 288 272.085V360c0 20.700 24.300 31.453 39.687 18.164l176.004-152c11.071-9.562 11.086-26.753 0-36.328z"/></svg></div></td></tr>
<tr class="cu" style="height:49px"><td>422</td><td>test еуые</td><td>vigar97617@firm<br>jam.com</td><td>Агрономичное</td><td>89999999999</td><td>$8.00</td><td class="dt">2021-09-24</td><td>Customer</td><td class="st"><span class="tg"><i></i></span></td><td class="ac"><div class="acw"><svg class="ai" style="left:22px;top:0" width="12.300" height="10.500" viewBox="0 0 576 512" preserveAspectRatio="none"><path fill="#696d73" d="M402.3 344.9l32-32c5-5 13.700-1.500 13.700 5.700V464c0 26.500-21.500 48-48 48H48c-26.500 0-48-21.500-48-48V112c0-26.500 21.500-48 48-48h273.500c7.100 0 10.700 8.600 5.700 13.700l-32 32c-1.500 1.500-3.500 2.300-5.700 2.300H48v352h352V350.500c0-2.100.8-4.100 2.300-5.600zm156.600-201.800L296.300 405.700l-90.400 10c-26.200 2.900-48.500-19.200-45.600-45.600l10-90.400L432.900 17.100c22.900-22.900 59.900-22.900 82.700 0l43.200 43.200c22.900 22.900 22.900 60 .1 82.800zM460.100 174L402 115.900 216.200 301.800l-7.300 65.300 65.300-7.300L460.100 174zm64.800-79.700l-43.200-43.200c-4.100-4.100-10.800-4.100-14.800 0L436 82l58.100 58.100 30.900-30.900c4-4.200 4-10.800-.1-14.900z"/></svg><svg class="ai" style="left:45.500px;top:0.300px" width="9.500" height="10.500" viewBox="0 0 448 512" preserveAspectRatio="none"><path fill="#696d73" d="M268 416h24a12 12 0 0 0 12-12V188a12 12 0 0 0-12-12h-24a12 12 0 0 0-12 12v216a12 12 0 0 0 12 12zM432 80h-82.410l-34-56.700A48 48 0 0 0 274.410 0H173.590a48 48 0 0 0-41.160 23.300L98.410 80H16A16 16 0 0 0 0 96v16a16 16 0 0 0 16 16h16v336a48 48 0 0 0 48 48h288a48 48 0 0 0 48-48V128h16a16 16 0 0 0 16-16V96a16 16 0 0 0-16-16zM171.840 50.910A6 6 0 0 1 177 48h94a6 6 0 0 1 5.150 2.910L293.610 80H154.390zM368 464H80V128h288zm-212-48h24a12 12 0 0 0 12-12V188a12 12 0 0 0-12-12h-24a12 12 0 0 0-12 12v216a12 12 0 0 0 12 12z"/></svg><svg class="ai" style="left:66.900px;top:-0.600px" width="12.300" height="13" viewBox="0 0 512 512" preserveAspectRatio="none"><path fill="#696d73" d="M464 64H48C21.490 64 0 85.490 0 112v288c0 26.510 21.490 48 48 48h416c26.510 0 48-21.490 48-48V112c0-26.510-21.490-48-48-48zm0 48v40.805c-22.422 18.259-58.168 46.651-134.587 106.490-16.841 13.247-50.201 45.072-73.413 44.701-23.208.375-56.579-31.459-73.413-44.701C106.180 199.465 70.425 171.067 48 152.805V112h416zM48 400V214.398c22.914 18.251 55.409 43.862 104.938 82.646 21.857 17.205 60.134 55.186 103.062 54.955 42.717.231 80.509-37.199 103.053-54.947 49.528-38.783 82.032-64.401 104.947-82.653V400H48z"/></svg><svg class="ai" style="left:89.900px;top:-0.700px" width="12.600" height="12" viewBox="0 0 512 512" preserveAspectRatio="none"><path fill="#474b52" d="M503.691 189.836L327.687 37.851C312.281 24.546 288 35.347 288 56.015v80.053C127.371 137.907 0 170.100 0 322.326c0 61.441 39.581 122.309 83.333 154.132 13.653 9.931 33.111-2.533 28.077-18.631C66.066 312.814 132.917 274.316 288 272.085V360c0 20.700 24.300 31.453 39.687 18.164l176.004-152c11.071-9.562 11.086-26.753 0-36.328z"/></svg></div></td></tr>
<tr class="cu" style="height:66px"><td>421</td><td>ewrfew<br>wegwgwe</td><td>maksym.sapo.z.<br>hnikov@gmail.co<br>m</td><td>345345345</td><td>345345</td><td>$0.00</td><td class="dt">2021-09-21</td><td>Customer</td><td class="st"><span class="tg"><i></i></span></td><td class="ac"><div class="acw"><svg class="ai" style="left:22px;top:0" width="12.300" height="10.500" viewBox="0 0 576 512" preserveAspectRatio="none"><path fill="#696d73" d="M402.3 344.9l32-32c5-5 13.700-1.500 13.700 5.700V464c0 26.500-21.500 48-48 48H48c-26.500 0-48-21.500-48-48V112c0-26.500 21.500-48 48-48h273.500c7.100 0 10.700 8.600 5.700 13.700l-32 32c-1.500 1.500-3.500 2.300-5.700 2.300H48v352h352V350.500c0-2.100.8-4.100 2.300-5.600zm156.600-201.800L296.300 405.700l-90.400 10c-26.200 2.900-48.500-19.200-45.600-45.600l10-90.400L432.900 17.100c22.900-22.900 59.900-22.900 82.700 0l43.200 43.200c22.900 22.900 22.900 60 .1 82.800zM460.100 174L402 115.900 216.200 301.800l-7.300 65.300 65.300-7.300L460.100 174zm64.800-79.700l-43.200-43.200c-4.100-4.100-10.800-4.100-14.800 0L436 82l58.100 58.100 30.900-30.900c4-4.200 4-10.800-.1-14.900z"/></svg><svg class="ai" style="left:45.500px;top:0.300px" width="9.500" height="10.500" viewBox="0 0 448 512" preserveAspectRatio="none"><path fill="#696d73" d="M268 416h24a12 12 0 0 0 12-12V188a12 12 0 0 0-12-12h-24a12 12 0 0 0-12 12v216a12 12 0 0 0 12 12zM432 80h-82.410l-34-56.700A48 48 0 0 0 274.410 0H173.590a48 48 0 0 0-41.160 23.300L98.410 80H16A16 16 0 0 0 0 96v16a16 16 0 0 0 16 16h16v336a48 48 0 0 0 48 48h288a48 48 0 0 0 48-48V128h16a16 16 0 0 0 16-16V96a16 16 0 0 0-16-16zM171.840 50.910A6 6 0 0 1 177 48h94a6 6 0 0 1 5.150 2.910L293.610 80H154.390zM368 464H80V128h288zm-212-48h24a12 12 0 0 0 12-12V188a12 12 0 0 0-12-12h-24a12 12 0 0 0-12 12v216a12 12 0 0 0 12 12z"/></svg><svg class="ai" style="left:66.900px;top:-0.600px" width="12.300" height="13" viewBox="0 0 512 512" preserveAspectRatio="none"><path fill="#696d73" d="M464 64H48C21.490 64 0 85.490 0 112v288c0 26.510 21.490 48 48 48h416c26.510 0 48-21.490 48-48V112c0-26.510-21.490-48-48-48zm0 48v40.805c-22.422 18.259-58.168 46.651-134.587 106.490-16.841 13.247-50.201 45.072-73.413 44.701-23.208.375-56.579-31.459-73.413-44.701C106.180 199.465 70.425 171.067 48 152.805V112h416zM48 400V214.398c22.914 18.251 55.409 43.862 104.938 82.646 21.857 17.205 60.134 55.186 103.062 54.955 42.717.231 80.509-37.199 103.053-54.947 49.528-38.783 82.032-64.401 104.947-82.653V400H48z"/></svg><svg class="ai" style="left:89.900px;top:-0.700px" width="12.600" height="12" viewBox="0 0 512 512" preserveAspectRatio="none"><path fill="#474b52" d="M503.691 189.836L327.687 37.851C312.281 24.546 288 35.347 288 56.015v80.053C127.371 137.907 0 170.100 0 322.326c0 61.441 39.581 122.309 83.333 154.132 13.653 9.931 33.111-2.533 28.077-18.631C66.066 312.814 132.917 274.316 288 272.085V360c0 20.700 24.300 31.453 39.687 18.164l176.004-152c11.071-9.562 11.086-26.753 0-36.328z"/></svg></div></td></tr>
<tr class="sn" style="height:49px"><td>419</td><td>Sasha Sasha</td><td>testdahanavar12<br>@gmail.com</td><td></td><td></td><td>$0.00</td><td class="dt">2021-09-08</td><td>Social Network</td><td class="st"><span class="tg"><i></i></span></td><td class="ac"><div class="acw"><svg class="ai" style="left:22px;top:0" width="12.300" height="10.500" viewBox="0 0 576 512" preserveAspectRatio="none"><path fill="#696d73" d="M402.3 344.9l32-32c5-5 13.700-1.500 13.700 5.700V464c0 26.500-21.500 48-48 48H48c-26.500 0-48-21.500-48-48V112c0-26.500 21.500-48 48-48h273.500c7.100 0 10.700 8.600 5.700 13.700l-32 32c-1.500 1.500-3.500 2.300-5.700 2.300H48v352h352V350.500c0-2.100.8-4.100 2.300-5.600zm156.600-201.800L296.300 405.700l-90.400 10c-26.200 2.900-48.500-19.200-45.600-45.600l10-90.400L432.900 17.100c22.900-22.900 59.900-22.900 82.700 0l43.200 43.200c22.900 22.900 22.900 60 .1 82.800zM460.100 174L402 115.900 216.200 301.800l-7.300 65.300 65.300-7.300L460.100 174zm64.800-79.700l-43.200-43.200c-4.100-4.100-10.800-4.100-14.800 0L436 82l58.100 58.100 30.900-30.900c4-4.200 4-10.800-.1-14.900z"/></svg><svg class="ai" style="left:45.500px;top:0.300px" width="9.500" height="10.500" viewBox="0 0 448 512" preserveAspectRatio="none"><path fill="#696d73" d="M268 416h24a12 12 0 0 0 12-12V188a12 12 0 0 0-12-12h-24a12 12 0 0 0-12 12v216a12 12 0 0 0 12 12zM432 80h-82.410l-34-56.700A48 48 0 0 0 274.410 0H173.590a48 48 0 0 0-41.160 23.300L98.410 80H16A16 16 0 0 0 0 96v16a16 16 0 0 0 16 16h16v336a48 48 0 0 0 48 48h288a48 48 0 0 0 48-48V128h16a16 16 0 0 0 16-16V96a16 16 0 0 0-16-16zM171.840 50.910A6 6 0 0 1 177 48h94a6 6 0 0 1 5.150 2.910L293.610 80H154.390zM368 464H80V128h288zm-212-48h24a12 12 0 0 0 12-12V188a12 12 0 0 0-12-12h-24a12 12 0 0 0-12 12v216a12 12 0 0 0 12 12z"/></svg><svg class="ai" style="left:66.900px;top:-0.600px" width="12.300" height="13" viewBox="0 0 512 512" preserveAspectRatio="none"><path fill="#696d73" d="M464 64H48C21.490 64 0 85.490 0 112v288c0 26.510 21.490 48 48 48h416c26.510 0 48-21.490 48-48V112c0-26.510-21.490-48-48-48zm0 48v40.805c-22.422 18.259-58.168 46.651-134.587 106.490-16.841 13.247-50.201 45.072-73.413 44.701-23.208.375-56.579-31.459-73.413-44.701C106.180 199.465 70.425 171.067 48 152.805V112h416zM48 400V214.398c22.914 18.251 55.409 43.862 104.938 82.646 21.857 17.205 60.134 55.186 103.062 54.955 42.717.231 80.509-37.199 103.053-54.947 49.528-38.783 82.032-64.401 104.947-82.653V400H48z"/></svg><svg class="ai" style="left:89.900px;top:-0.700px" width="12.600" height="12" viewBox="0 0 512 512" preserveAspectRatio="none"><path fill="#474b52" d="M503.691 189.836L327.687 37.851C312.281 24.546 288 35.347 288 56.015v80.053C127.371 137.907 0 170.100 0 322.326c0 61.441 39.581 122.309 83.333 154.132 13.653 9.931 33.111-2.533 28.077-18.631C66.066 312.814 132.917 274.316 288 272.085V360c0 20.700 24.300 31.453 39.687 18.164l176.004-152c11.071-9.562 11.086-26.753 0-36.328z"/></svg></div></td></tr>
<tr class="sn" style="height:49px"><td>418</td><td>Link Rumple</td><td>linkrumple@gmai<br>l.com</td><td></td><td></td><td>$0.00</td><td class="dt">2021-08-19</td><td>Social Network</td><td class="st"><span class="tg"><i></i></span></td><td class="ac"><div class="acw"><svg class="ai" style="left:22px;top:0" width="12.300" height="10.500" viewBox="0 0 576 512" preserveAspectRatio="none"><path fill="#696d73" d="M402.3 344.9l32-32c5-5 13.700-1.500 13.700 5.700V464c0 26.500-21.500 48-48 48H48c-26.500 0-48-21.500-48-48V112c0-26.500 21.500-48 48-48h273.500c7.100 0 10.700 8.600 5.700 13.700l-32 32c-1.500 1.500-3.500 2.300-5.700 2.300H48v352h352V350.500c0-2.100.8-4.100 2.300-5.600zm156.600-201.800L296.300 405.700l-90.400 10c-26.200 2.900-48.500-19.200-45.600-45.600l10-90.400L432.900 17.100c22.900-22.900 59.900-22.900 82.700 0l43.200 43.200c22.900 22.900 22.900 60 .1 82.800zM460.100 174L402 115.900 216.200 301.800l-7.300 65.300 65.300-7.300L460.100 174zm64.800-79.700l-43.200-43.200c-4.100-4.100-10.800-4.100-14.800 0L436 82l58.100 58.100 30.900-30.900c4-4.200 4-10.800-.1-14.900z"/></svg><svg class="ai" style="left:45.500px;top:0.300px" width="9.500" height="10.500" viewBox="0 0 448 512" preserveAspectRatio="none"><path fill="#696d73" d="M268 416h24a12 12 0 0 0 12-12V188a12 12 0 0 0-12-12h-24a12 12 0 0 0-12 12v216a12 12 0 0 0 12 12zM432 80h-82.410l-34-56.700A48 48 0 0 0 274.410 0H173.590a48 48 0 0 0-41.160 23.300L98.410 80H16A16 16 0 0 0 0 96v16a16 16 0 0 0 16 16h16v336a48 48 0 0 0 48 48h288a48 48 0 0 0 48-48V128h16a16 16 0 0 0 16-16V96a16 16 0 0 0-16-16zM171.840 50.910A6 6 0 0 1 177 48h94a6 6 0 0 1 5.150 2.910L293.610 80H154.390zM368 464H80V128h288zm-212-48h24a12 12 0 0 0 12-12V188a12 12 0 0 0-12-12h-24a12 12 0 0 0-12 12v216a12 12 0 0 0 12 12z"/></svg><svg class="ai" style="left:66.900px;top:-0.600px" width="12.300" height="13" viewBox="0 0 512 512" preserveAspectRatio="none"><path fill="#696d73" d="M464 64H48C21.490 64 0 85.490 0 112v288c0 26.510 21.490 48 48 48h416c26.510 0 48-21.490 48-48V112c0-26.510-21.490-48-48-48zm0 48v40.805c-22.422 18.259-58.168 46.651-134.587 106.490-16.841 13.247-50.201 45.072-73.413 44.701-23.208.375-56.579-31.459-73.413-44.701C106.180 199.465 70.425 171.067 48 152.805V112h416zM48 400V214.398c22.914 18.251 55.409 43.862 104.938 82.646 21.857 17.205 60.134 55.186 103.062 54.955 42.717.231 80.509-37.199 103.053-54.947 49.528-38.783 82.032-64.401 104.947-82.653V400H48z"/></svg><svg class="ai" style="left:89.900px;top:-0.700px" width="12.600" height="12" viewBox="0 0 512 512" preserveAspectRatio="none"><path fill="#474b52" d="M503.691 189.836L327.687 37.851C312.281 24.546 288 35.347 288 56.015v80.053C127.371 137.907 0 170.100 0 322.326c0 61.441 39.581 122.309 83.333 154.132 13.653 9.931 33.111-2.533 28.077-18.631C66.066 312.814 132.917 274.316 288 272.085V360c0 20.700 24.300 31.453 39.687 18.164l176.004-152c11.071-9.562 11.086-26.753 0-36.328z"/></svg></div></td></tr>
<tr class="sn" style="height:65px"><td>417</td><td>Prince Cat</td><td>geogatedproject<br>1024@gmail.co<br>m</td><td></td><td></td><td>$0.00</td><td class="dt">2021-08-18</td><td>Social Network</td><td class="st"><span class="tg"><i></i></span></td><td class="ac"><div class="acw"><svg class="ai" style="left:22px;top:0" width="12.300" height="10.500" viewBox="0 0 576 512" preserveAspectRatio="none"><path fill="#696d73" d="M402.3 344.9l32-32c5-5 13.700-1.500 13.700 5.700V464c0 26.500-21.500 48-48 48H48c-26.500 0-48-21.500-48-48V112c0-26.500 21.500-48 48-48h273.500c7.100 0 10.700 8.600 5.700 13.700l-32 32c-1.500 1.500-3.500 2.300-5.700 2.300H48v352h352V350.500c0-2.100.8-4.100 2.300-5.600zm156.600-201.800L296.300 405.700l-90.400 10c-26.200 2.900-48.500-19.200-45.600-45.600l10-90.400L432.900 17.100c22.900-22.900 59.900-22.900 82.700 0l43.200 43.200c22.900 22.900 22.900 60 .1 82.800zM460.100 174L402 115.900 216.200 301.800l-7.300 65.300 65.300-7.300L460.100 174zm64.800-79.700l-43.200-43.200c-4.100-4.100-10.800-4.100-14.800 0L436 82l58.100 58.100 30.900-30.900c4-4.200 4-10.800-.1-14.900z"/></svg><svg class="ai" style="left:45.500px;top:0.300px" width="9.500" height="10.500" viewBox="0 0 448 512" preserveAspectRatio="none"><path fill="#696d73" d="M268 416h24a12 12 0 0 0 12-12V188a12 12 0 0 0-12-12h-24a12 12 0 0 0-12 12v216a12 12 0 0 0 12 12zM432 80h-82.410l-34-56.700A48 48 0 0 0 274.410 0H173.590a48 48 0 0 0-41.160 23.300L98.410 80H16A16 16 0 0 0 0 96v16a16 16 0 0 0 16 16h16v336a48 48 0 0 0 48 48h288a48 48 0 0 0 48-48V128h16a16 16 0 0 0 16-16V96a16 16 0 0 0-16-16zM171.840 50.910A6 6 0 0 1 177 48h94a6 6 0 0 1 5.150 2.910L293.610 80H154.390zM368 464H80V128h288zm-212-48h24a12 12 0 0 0 12-12V188a12 12 0 0 0-12-12h-24a12 12 0 0 0-12 12v216a12 12 0 0 0 12 12z"/></svg><svg class="ai" style="left:66.900px;top:-0.600px" width="12.300" height="13" viewBox="0 0 512 512" preserveAspectRatio="none"><path fill="#696d73" d="M464 64H48C21.490 64 0 85.490 0 112v288c0 26.510 21.490 48 48 48h416c26.510 0 48-21.490 48-48V112c0-26.510-21.490-48-48-48zm0 48v40.805c-22.422 18.259-58.168 46.651-134.587 106.490-16.841 13.247-50.201 45.072-73.413 44.701-23.208.375-56.579-31.459-73.413-44.701C106.180 199.465 70.425 171.067 48 152.805V112h416zM48 400V214.398c22.914 18.251 55.409 43.862 104.938 82.646 21.857 17.205 60.134 55.186 103.062 54.955 42.717.231 80.509-37.199 103.053-54.947 49.528-38.783 82.032-64.401 104.947-82.653V400H48z"/></svg><svg class="ai" style="left:89.900px;top:-0.700px" width="12.600" height="12" viewBox="0 0 512 512" preserveAspectRatio="none"><path fill="#474b52" d="M503.691 189.836L327.687 37.851C312.281 24.546 288 35.347 288 56.015v80.053C127.371 137.907 0 170.100 0 322.326c0 61.441 39.581 122.309 83.333 154.132 13.653 9.931 33.111-2.533 28.077-18.631C66.066 312.814 132.917 274.316 288 272.085V360c0 20.700 24.300 31.453 39.687 18.164l176.004-152c11.071-9.562 11.086-26.753 0-36.328z"/></svg></div></td></tr>
<tr class="sn" style="height:49px"><td>416</td><td>Mika Noah</td><td>geogatedproject<br>317@gmail.com</td><td></td><td></td><td>$0.00</td><td class="dt">2021-08-18</td><td>Social Network</td><td class="st"><span class="tg"><i></i></span></td><td class="ac"><div class="acw"><svg class="ai" style="left:22px;top:0" width="12.300" height="10.500" viewBox="0 0 576 512" preserveAspectRatio="none"><path fill="#696d73" d="M402.3 344.9l32-32c5-5 13.700-1.500 13.700 5.700V464c0 26.500-21.500 48-48 48H48c-26.500 0-48-21.500-48-48V112c0-26.500 21.500-48 48-48h273.500c7.100 0 10.700 8.600 5.700 13.700l-32 32c-1.500 1.500-3.500 2.300-5.700 2.300H48v352h352V350.500c0-2.100.8-4.100 2.300-5.600zm156.600-201.800L296.300 405.700l-90.400 10c-26.200 2.900-48.500-19.200-45.600-45.600l10-90.400L432.900 17.100c22.900-22.900 59.900-22.900 82.700 0l43.200 43.200c22.900 22.900 22.900 60 .1 82.800zM460.100 174L402 115.900 216.200 301.800l-7.300 65.300 65.300-7.300L460.100 174zm64.800-79.700l-43.200-43.200c-4.100-4.100-10.800-4.100-14.800 0L436 82l58.100 58.100 30.900-30.900c4-4.200 4-10.800-.1-14.900z"/></svg><svg class="ai" style="left:45.500px;top:0.300px" width="9.500" height="10.500" viewBox="0 0 448 512" preserveAspectRatio="none"><path fill="#696d73" d="M268 416h24a12 12 0 0 0 12-12V188a12 12 0 0 0-12-12h-24a12 12 0 0 0-12 12v216a12 12 0 0 0 12 12zM432 80h-82.410l-34-56.700A48 48 0 0 0 274.410 0H173.590a48 48 0 0 0-41.160 23.300L98.410 80H16A16 16 0 0 0 0 96v16a16 16 0 0 0 16 16h16v336a48 48 0 0 0 48 48h288a48 48 0 0 0 48-48V128h16a16 16 0 0 0 16-16V96a16 16 0 0 0-16-16zM171.840 50.910A6 6 0 0 1 177 48h94a6 6 0 0 1 5.150 2.910L293.610 80H154.390zM368 464H80V128h288zm-212-48h24a12 12 0 0 0 12-12V188a12 12 0 0 0-12-12h-24a12 12 0 0 0-12 12v216a12 12 0 0 0 12 12z"/></svg><svg class="ai" style="left:66.900px;top:-0.600px" width="12.300" height="13" viewBox="0 0 512 512" preserveAspectRatio="none"><path fill="#696d73" d="M464 64H48C21.490 64 0 85.490 0 112v288c0 26.510 21.490 48 48 48h416c26.510 0 48-21.490 48-48V112c0-26.510-21.490-48-48-48zm0 48v40.805c-22.422 18.259-58.168 46.651-134.587 106.490-16.841 13.247-50.201 45.072-73.413 44.701-23.208.375-56.579-31.459-73.413-44.701C106.180 199.465 70.425 171.067 48 152.805V112h416zM48 400V214.398c22.914 18.251 55.409 43.862 104.938 82.646 21.857 17.205 60.134 55.186 103.062 54.955 42.717.231 80.509-37.199 103.053-54.947 49.528-38.783 82.032-64.401 104.947-82.653V400H48z"/></svg><svg class="ai" style="left:89.900px;top:-0.700px" width="12.600" height="12" viewBox="0 0 512 512" preserveAspectRatio="none"><path fill="#474b52" d="M503.691 189.836L327.687 37.851C312.281 24.546 288 35.347 288 56.015v80.053C127.371 137.907 0 170.100 0 322.326c0 61.441 39.581 122.309 83.333 154.132 13.653 9.931 33.111-2.533 28.077-18.631C66.066 312.814 132.917 274.316 288 272.085V360c0 20.700 24.300 31.453 39.687 18.164l176.004-152c11.071-9.562 11.086-26.753 0-36.328z"/></svg></div></td></tr>
<tr class="gr" style="height:10px"><td></td><td></td><td></td><td></td><td></td><td></td><td></td><td></td><td></td><td></td></tr>
</table>
</div>
</body></html>
